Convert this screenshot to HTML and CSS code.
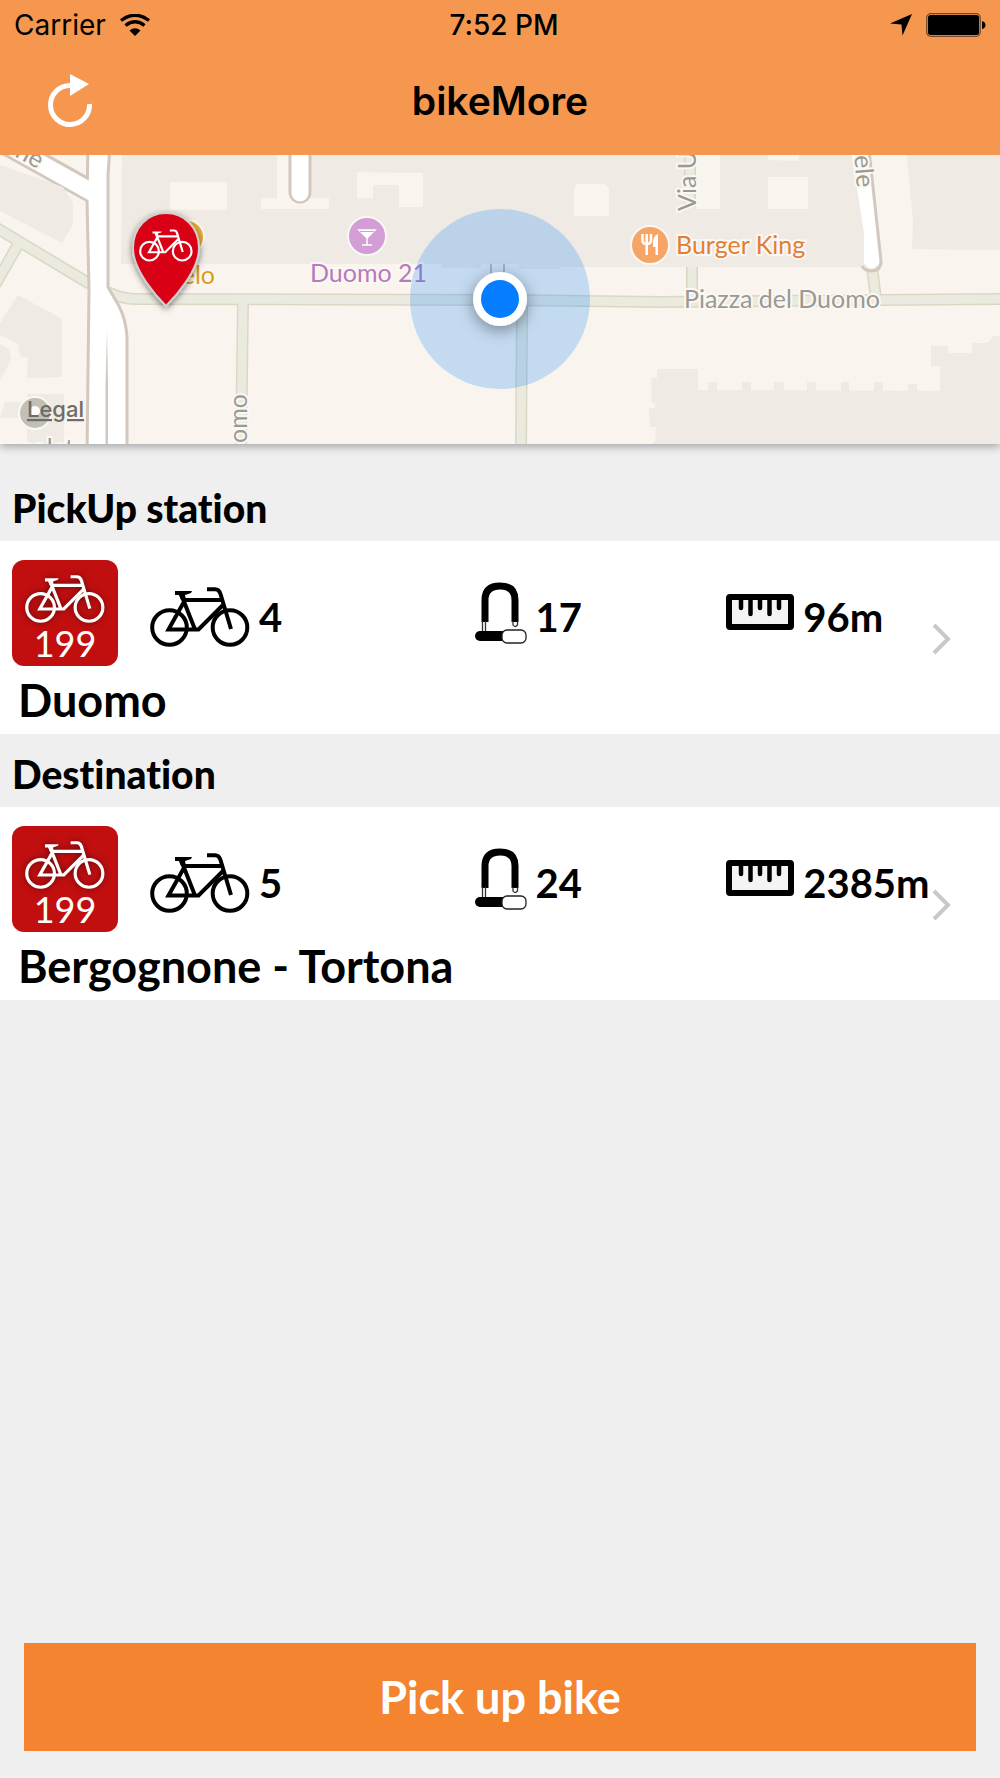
FILE: index.html
```html
<!DOCTYPE html>
<html lang="en">
<head>
    <meta charset="UTF-8">
    <meta name="viewport" content="width=device-width, initial-scale=1">
    <title>bikeMore</title>
    <link rel="stylesheet" href="styles.css">
</head>
<body>
    <!-- Shared icons -->
    <svg class="sprite" aria-hidden="true">
        <symbol id="bike" viewBox="0 0 100 60">
            <g fill="none" stroke="currentColor" stroke-width="4">
                <circle cx="19.500" cy="40.500" r="17.300"></circle>
                <circle cx="80" cy="40.500" r="17.300"></circle>
                <path d="M31 7 L45 42.500 H18.500 L35 13 H72 M46 42.500 H48.500 L73 18 M57 2.200 H65 Q69 2.200 70.500 7 L81 42"></path>
            </g>
            <path fill="currentColor" d="M25 4 H42 L41 6 L35 8 L36 13 H31 L29 8 H25 Z"></path>
        </symbol>
        <symbol id="lock" viewBox="0 0 52 70">
            <path d="M10 40 V18 Q10 4 25 4 T40 18 V40" fill="none" stroke="#000" stroke-width="7"></path>
            <path d="M7.500 39 V50 M10.500 39 V50 M38 39 V43 Q40 46 42.500 43 V39" fill="none" stroke="#333" stroke-width="1.300"></path>
            <rect x="0" y="49" width="32" height="10" rx="5"></rect>
            <rect x="27" y="48" width="24" height="13" rx="5" fill="#fff" stroke="#222" stroke-width="1.300"></rect>
        </symbol>
        <symbol id="ruler" viewBox="0 0 68 46">
            <rect x="3" y="3" width="62" height="30" rx="1" fill="#f4f4f4" stroke="#000" stroke-width="6" stroke-linejoin="round"></rect>
            <path d="M15 5 V14 M24.500 5 V20 M34 5 V14 M43.500 5 V20 M53 5 V14" stroke="#000" stroke-width="4.500" stroke-linecap="round"></path>
        </symbol>
        <symbol id="chevron" viewBox="0 0 20 32">
            <path d="M2 2 L16 16 L2 30" fill="none" stroke="#c7c7cc" stroke-width="4"></path>
        </symbol>
    </svg>

    <header class="top-bar">
        <div class="status-bar">
            <div class="carrier">
                <span>Carrier</span>
                <svg width="30" height="22" viewBox="0 0 30 22" aria-hidden="true">
                    <g fill="none" stroke="#000" stroke-width="3.400">
                        <path d="M1 6.500 Q15 -4 29 6.500"></path>
                        <path d="M5.500 11.500 Q15 4 24.500 11.500"></path>
                    </g>
                    <path d="M9.500 16.500 Q15 12 20.500 16.500 L15 22 Z"></path>
                </svg>
            </div>
            <time class="clock">7:52 PM</time>
            <div class="indicators">
                <svg width="22" height="22" viewBox="0 0 22 22" aria-hidden="true">
                    <path d="M0 9.500 L22 0 L12.500 21.500 L11.500 10.500 Z"></path>
                </svg>
                <svg width="60" height="24" viewBox="0 0 60 24" aria-hidden="true">
                    <rect x="0.700" y="0.700" width="53.500" height="22.600" rx="4" fill="none" stroke="#7a4825" stroke-width="1.300"></rect>
                    <rect x="2" y="2" width="51" height="20" rx="2.500"></rect>
                    <path d="M56 8 Q59.500 9 59.500 12 T56 16 Z"></path>
                </svg>
            </div>
        </div>
        <div class="nav-bar">
            <button class="refresh" type="button" aria-label="Refresh">
                <svg width="46" height="54" viewBox="0 0 46 54" aria-hidden="true">
                    <path d="M22 11.500 A19.500 19.500 0 1 0 41.500 30" fill="none" stroke="#fff" stroke-width="5"></path>
                    <path d="M22 0 L41 10 L22 22 Z" fill="#fff"></path>
                </svg>
            </button>
            <h1>bikeMore</h1>
        </div>
    </header>

    <section class="map" aria-label="Map">
        <svg class="map-canvas" viewBox="0 0 1000 289" preserveAspectRatio="xMidYMid slice">
            <defs>
                <filter id="pinShadow" x="-30%" y="-30%" width="160%" height="160%">
                    <feDropShadow dx="0" dy="2" stdDeviation="3" flood-opacity="0.5"></feDropShadow>
                </filter>
                <filter id="dotShadow" x="-60%" y="-60%" width="220%" height="220%">
                    <feDropShadow dx="0" dy="4" stdDeviation="8" flood-opacity="0.4"></feDropShadow>
                </filter>
            </defs>

            <!-- Buildings -->
            <g class="building">
                <path d="M122 0 H866 V112 H560 V114 H519 V109 H481 V113 H442 V109 H121 Z"></path>
                <path d="M907 0 L913 67 L912 94 L1000 95 V0 Z"></path>
                <path d="M657 214 H698 V235 L940 236 V211 H931 V191 H948 V198 H972 V188 H988 L993 181 H1000 V289 H650 L655 287 L656 272 H650 L649 253 H655 V248 H652 L651 223 H657 Z"></path>
                <path d="M708 227 h9 v10 h-9 Z M742 227 h9 v10 h-9 Z M774 227 h10 v10 h-10 Z M807 227 h9 v10 h-9 Z M841 227 h8 v10 h-8 Z M874 227 h9 v10 h-9 Z M908 229 h9 v8 h-9 Z"></path>
                <path d="M18 140 L62 164 V222 L27 223 L28 203 L20 201 L18 189 L0 180 V168 Z"></path>
                <path d="M0 189 L9 194 L11 205 L0 225 Z M27 239 H64 V289 H27 V263 H0 L5 247 H27 Z"></path>
            </g>
            <g class="yard">
                <path d="M170 27 h57 v28 h-57 Z M277 0 h15 v43 h37 v11 h-68 v-11 h16 Z"></path>
                <path d="M357 17 L423 18 V52 H399 V30 H373 V43 H357 Z"></path>
                <path d="M577 29 H605 L609 32 V61 H574 V34 Z"></path>
                <path d="M685 0 H720 V54 H696 V20 H685 Z M768 0 h31 v6 L768 5 Z M768 22 h40 v32 h-40 Z"></path>
            </g>

            <!-- Footpaths -->
            <g class="path-edge">
                <path d="M-5 72 L90 129 M19 88 L-5 130"></path>
                <path d="M105 136 Q122 144 135 144 L500 145 L660 147 L880 145 L1005 144"></path>
                <path d="M243 145 L241 295 M522 148 L521 295 M692 112 V146 M872 112 L876 144 M690 -5 V52"></path>
            </g>
            <g class="path-fill">
                <path d="M-5 72 L90 129 M19 88 L-5 130"></path>
                <path d="M105 136 Q122 144 135 144 L500 145 L660 147 L880 145 L1005 144"></path>
                <path d="M243 145 L241 295 M522 148 L521 295 M692 112 V146 M872 112 L876 144 M690 -5 V52"></path>
            </g>

            <!-- Streets -->
            <path class="street-edge" d="M-10 -20 L92 37"></path>
            <path class="building" d="M0 10 L63 32 L73 48 V69 L62 88 L0 56 Z"></path>
            <path class="street" d="M88 -10 L87 45 L89 135 L87 300 H127 V182 Q126 165 119 151 L108 132 V20 L110 -10 Z"></path>
            <path class="street-fill" d="M-10 -20 L95 39"></path>
            <path fill="#d2c8be" d="M107 175 L108 230 V289 H105.500 V230 Z"></path>
            <path class="street-edge" stroke-linecap="round" d="M300 -20 V37"></path>
            <path class="street-fill" stroke-linecap="round" d="M300 -20 V38"></path>
            <path fill="#fff" d="M851 -5 L864 78 V108 Q872 120 881 106 L870 -5 Z"></path>
            <path class="street-line" d="M869 -5 L881 106 Q881 116 871 116 Q865 116 862 111"></path>
            <path d="M491 109 V120 M504 109 V120" stroke="#cabfb5" stroke-width="2"></path>

            <!-- Labels -->
            <g class="label">
                <text class="grey" transform="translate(14 1) rotate(29)">ne</text>
                <text class="grey" transform="translate(696 56) rotate(-90)">Via U</text>
                <text class="grey" text-anchor="end" transform="translate(857 33) rotate(85)">ele</text>
                <text class="grey" transform="translate(247 288) rotate(-90)">omo</text>
                <text class="grey" x="684" y="153">Piazza del Duomo</text>
                <text class="grey" text-anchor="end" x="88" y="302">onsolato</text>
                <text class="amber" text-anchor="end" x="215" y="129">elo</text>
                <text class="purple" x="310" y="127">Duomo 21</text>
                <text class="orange" x="676" y="99">Burger King</text>
            </g>

            <!-- Places -->
            <g stroke="#fbf8f3" stroke-width="2">
                <circle cx="187" cy="82" r="17" fill="#e8ac36"></circle>
                <circle cx="367" cy="81" r="19" fill="#d39dd6"></circle>
                <circle cx="650" cy="90" r="19" fill="#f7a566"></circle>
                <circle cx="35" cy="258" r="16" fill="#c2bfb7"></circle>
            </g>
            <path d="M359 75 H375 L367 83 Z M367 83 V90 M362 90 H372" fill="#fff" stroke="#fff" stroke-width="1.500"></path>
            <path d="M360 76.500 H374" stroke="#d39dd6"></path>
            <path d="M642.500 79 V86 Q643 89 646.500 89 Q650.500 89 651 86 V79 M646.700 79 V100" fill="none" stroke="#fff" stroke-width="2.500"></path>
            <path d="M658 79 V100 H655.500 V92 H653 Q652 81 658 79 Z" fill="#fff"></path>
            <circle cx="35" cy="256" r="5" fill="#fff"></circle>
            <a href="#legal"><text class="legal" x="27" y="262">Legal</text></a>

            <!-- User location -->
            <circle cx="500" cy="144" r="90" fill="#007aff" fill-opacity="0.21"></circle>
            <circle cx="500" cy="144" r="27" fill="#fff" filter="url(#dotShadow)"></circle>
            <circle cx="500" cy="144" r="19" fill="#067dff"></circle>

            <!-- Station pin -->
            <path class="pin" filter="url(#pinShadow)" d="M166 151 C158 143 133 116 133 93 C133 73 147 58 166 58 S199 73 199 93 C199 116 174 143 166 151 Z"></path>
            <use href="#bike" class="pin-bike" x="139" y="74" width="54" height="33"></use>
        </svg>
    </section>

    <main class="stations">
        <h2>PickUp station</h2>
        <a class="station" href="#duomo">
            <div class="station-info">
                <div class="badge">
                    <svg><use href="#bike"></use></svg>
                    <span>199</span>
                </div>
                <div class="stats">
                    <div class="stat"><svg class="icon-bike"><use href="#bike"></use></svg><span>4</span></div>
                    <div class="stat"><svg class="icon-lock"><use href="#lock"></use></svg><span>17</span></div>
                    <div class="stat"><svg class="icon-ruler"><use href="#ruler"></use></svg><span>96m</span></div>
                </div>
                <div class="name">Duomo</div>
            </div>
            <svg class="chevron"><use href="#chevron"></use></svg>
        </a>

        <h2>Destination</h2>
        <a class="station" href="#bergognone-tortona">
            <div class="station-info">
                <div class="badge">
                    <svg><use href="#bike"></use></svg>
                    <span>199</span>
                </div>
                <div class="stats">
                    <div class="stat"><svg class="icon-bike"><use href="#bike"></use></svg><span>5</span></div>
                    <div class="stat"><svg class="icon-lock"><use href="#lock"></use></svg><span>24</span></div>
                    <div class="stat"><svg class="icon-ruler"><use href="#ruler"></use></svg><span>2385m</span></div>
                </div>
                <div class="name">Bergognone - Tortona</div>
            </div>
            <svg class="chevron"><use href="#chevron"></use></svg>
        </a>
    </main>

    <footer class="actions">
        <button class="pick-up" type="button">Pick up bike</button>
    </footer>
</body>
</html>
```

FILE: styles.css
```css
* {
    box-sizing: border-box;
}
body {
    margin: 0;
    min-height: 100vh;
    display: flex;
    flex-direction: column;
    background: #efefef;
    color: #000;
    font-family: Lato, "Open Sans", sans-serif;
    font-variant-ligatures: none;
}
svg {
    display: block;
    flex: none;
}
.sprite {
    position: absolute;
    width: 0;
    height: 0;
}

/* Top bar */
.top-bar {
    position: relative;
    z-index: 1;
    background: #f5974f;
    font-family: Inter, "Liberation Sans", sans-serif;
}
.status-bar {
    display: grid;
    grid-template-columns: 1fr auto 1fr;
    align-items: center;
    height: 50px;
    padding: 0 14px;
    font-size: 28px;
}
.carrier {
    display: flex;
    align-items: center;
    gap: 14px;
}
.clock {
    padding-left: 8px;
    font-weight: 500;
}
.indicators {
    display: flex;
    align-items: center;
    justify-content: flex-end;
    gap: 14px;
}
.nav-bar {
    display: grid;
    grid-template-columns: 1fr auto 1fr;
    align-items: center;
    height: 105px;
    padding: 0 48px 4px;
}
.refresh {
    justify-self: start;
    padding: 0;
    border: none;
    background: none;
    cursor: pointer;
}
h1 {
    margin: 0;
    font-size: 39px;
    font-weight: 600;
}

/* Map */
.map {
    height: 289px;
    background: #f9f4ed;
    box-shadow: 0 3px 8px rgba(0, 0, 0, 0.3);
}
.map-canvas {
    width: 100%;
    height: 100%;
}
.building {
    fill: #efeae3;
}
.yard {
    fill: #f9f4ed;
}
.path-edge {
    fill: none;
    stroke: #dcd7c5;
    stroke-width: 12px;
}
.path-fill {
    fill: none;
    stroke: #eaeadf;
    stroke-width: 9px;
}
.street {
    fill: #fff;
    stroke: #d2c8be;
    stroke-width: 3px;
}
.street-edge {
    fill: none;
    stroke: #d2c8be;
    stroke-width: 23px;
}
.street-fill {
    fill: none;
    stroke: #fff;
    stroke-width: 17px;
}
.street-line {
    fill: none;
    stroke: #d2c8be;
    stroke-width: 3px;
}
.label text {
    font-size: 25px;
    stroke: #fbf8f3;
    stroke-width: 4px;
    paint-order: stroke;
}
.label .grey {
    fill: #9a9994;
}
.label .amber {
    fill: #dd9b1c;
}
.label .purple {
    fill: #b67abd;
}
.label .orange {
    fill: #e08038;
}
.legal {
    font-family: Inter, sans-serif;
    font-size: 22px;
    font-weight: 500;
    fill: #6d6c69;
    text-decoration: underline;
}
.pin {
    fill: #d90014;
    stroke: #cfcfcf;
    stroke-width: 2px;
}
.pin-bike {
    color: #fff;
}

/* Stations */
.stations {
    flex: 1;
    padding-top: 24px;
}
h2 {
    margin: 0;
    padding: 8px 12px 0;
    font-size: 39px;
    font-weight: 900;
    line-height: 65px;
}
.station {
    display: flex;
    align-items: center;
    padding: 19px 48px 0 12px;
    background: #fff;
    color: inherit;
    text-decoration: none;
}
.station-info {
    flex: 1;
    display: grid;
    grid-template-columns: 106px 1fr;
    column-gap: 32px;
}
.badge {
    display: flex;
    flex-direction: column;
    align-items: center;
    height: 106px;
    padding-top: 15px;
    border-radius: 12px;
    background: #c10f10;
    color: #fff;
    font-size: 36px;
    line-height: 40px;
}
.badge svg {
    width: 80px;
    height: 48px;
    filter: drop-shadow(0 0 3px rgba(0, 0, 0, 0.5));
}
.stats {
    display: grid;
    grid-template-columns: 325fr 252fr 206fr;
    align-items: center;
    padding-top: 8px;
}
.stat {
    display: flex;
    align-items: center;
    gap: 9px;
    font-size: 40px;
    font-weight: 700;
    line-height: 48px;
    white-space: nowrap;
}
.icon-bike {
    width: 100px;
    height: 60px;
}
.icon-lock {
    width: 52px;
    height: 70px;
}
.icon-ruler {
    width: 68px;
    height: 46px;
}
.name {
    grid-column: 1 / -1;
    padding-left: 6px;
    font-size: 45px;
    font-weight: 700;
    line-height: 68px;
}
.chevron {
    width: 20px;
    height: 32px;
    margin-bottom: 16px;
}

/* Bottom button */
.actions {
    padding: 0 24px 27px;
}
.pick-up {
    display: block;
    width: 100%;
    height: 108px;
    border: none;
    background: #f58430;
    color: #fff;
    font-family: inherit;
    font-size: 45px;
    font-weight: 700;
    cursor: pointer;
}
```
